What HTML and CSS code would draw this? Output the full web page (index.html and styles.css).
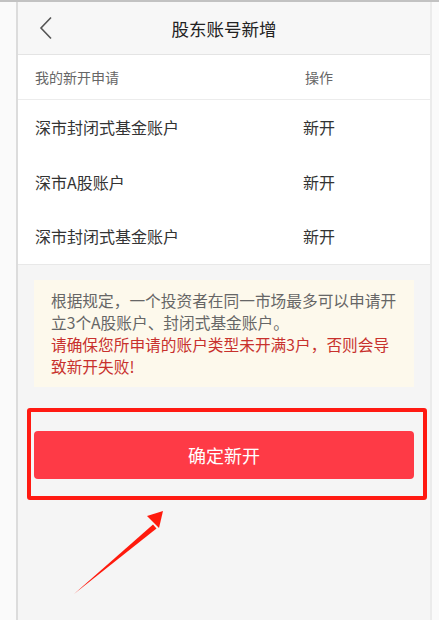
FILE: index.html
```html
<!DOCTYPE html>
<html lang="zh-CN">
<head>
<meta charset="utf-8">
<title>股东账号新增</title>
<link rel="stylesheet" href="styles.css">
</head>
<body>
<div class="topline"></div>
<div class="screen">
  <header class="navbar">
    <svg class="back" width="14" height="24" viewBox="0 0 14 24"><path d="M12 1.5 L2 12 L12 22.5" fill="none" stroke="#555" stroke-width="1.6"/></svg>
    <h1 class="title">股东账号新增</h1>
  </header>
  <section class="table">
    <div class="row head"><span>我的新开申请</span><span class="op">操作</span></div>
    <div class="row"><span>深市封闭式基金账户</span><span class="op">新开</span></div>
    <div class="row"><span>深市A股账户</span><span class="op">新开</span></div>
    <div class="row"><span>深市封闭式基金账户</span><span class="op">新开</span></div>
  </section>
  <div class="notice">
    <p class="grey">根据规定，一个投资者在同一市场最多可以申请开立3个A股账户、封闭式基金账户。</p>
    <p class="red">请确保您所申请的账户类型未开满3户，否则会导致新开失败!</p>
  </div>
  <div class="action">
    <button class="confirm">确定新开</button>
    <div class="mark-box"></div>
    <svg class="mark-arrow" width="100" height="90" viewBox="0 0 100 90">
      <polygon points="1,87 80,17.5 83.5,21.5" fill="#ff1a0d"/>
      <polygon points="90,4 74,9 86,21" fill="#ff1a0d"/>
    </svg>
  </div>
</div>
</body>
</html>
```
FILE: styles.css
```css
* { box-sizing: border-box; margin: 0; padding: 0; }
html, body { height: 100%; }
body {
  background: #fafafa;
  font-family: "Noto Sans CJK SC", "Noto Sans", sans-serif;
  overflow: hidden;
}
.topline { height: 2px; background: #c2c2c2; }
.screen {
  margin-left: 16px;
  width: 416px;
  height: 618px;
  border-left: 2px solid #dcdcdc;
  border-right: 2px solid #ebebeb;
  background: #f5f5f5;
  display: flex;
  flex-direction: column;
}
.navbar {
  height: 53px;
  background: #f7f7f7;
  border-bottom: 1px solid #e4e4e4;
  display: flex;
  align-items: center;
  justify-content: center;
  position: relative;
}
.back { position: absolute; left: 21px; top: 14px; }
.title { font-size: 17.5px; font-weight: normal; color: #222; }
.table { background: #fff; border-bottom: 1px solid #e8e8e8; }
.row {
  display: grid;
  grid-template-columns: 1fr 80px;
  padding: 0 71px 0 17px;
  height: 54.5px;
  align-items: center;
  font-size: 16px;
  color: #333;
}
.row.head {
  height: 45px;
  font-size: 14px;
  color: #666;
  border-bottom: 1px solid #ececec;
}
.op { text-align: center; }
.notice {
  margin: 15px 16px 0;
  background: #fdf9ec;
  padding: 10px 10px 10px 17px;
  font-size: 15.7px;
  line-height: 22px;
  height: 107px;
}
.grey { color: #666; }
.red { color: #c8312d; }
.action { position: relative; padding: 44px 16px 0; }
.confirm {
  display: block;
  width: 100%;
  height: 48px;
  border: none;
  border-radius: 4px;
  background: #fe3a46;
  color: #fff;
  font-family: inherit;
  font-size: 18px;
}
.mark-box {
  position: absolute;
  left: 9px;
  top: 21px;
  width: 400px;
  height: 92px;
  border: 4px solid #ff1a12;
  border-radius: 3px;
}
.mark-arrow { position: absolute; left: 55px; top: 120px; }
```
